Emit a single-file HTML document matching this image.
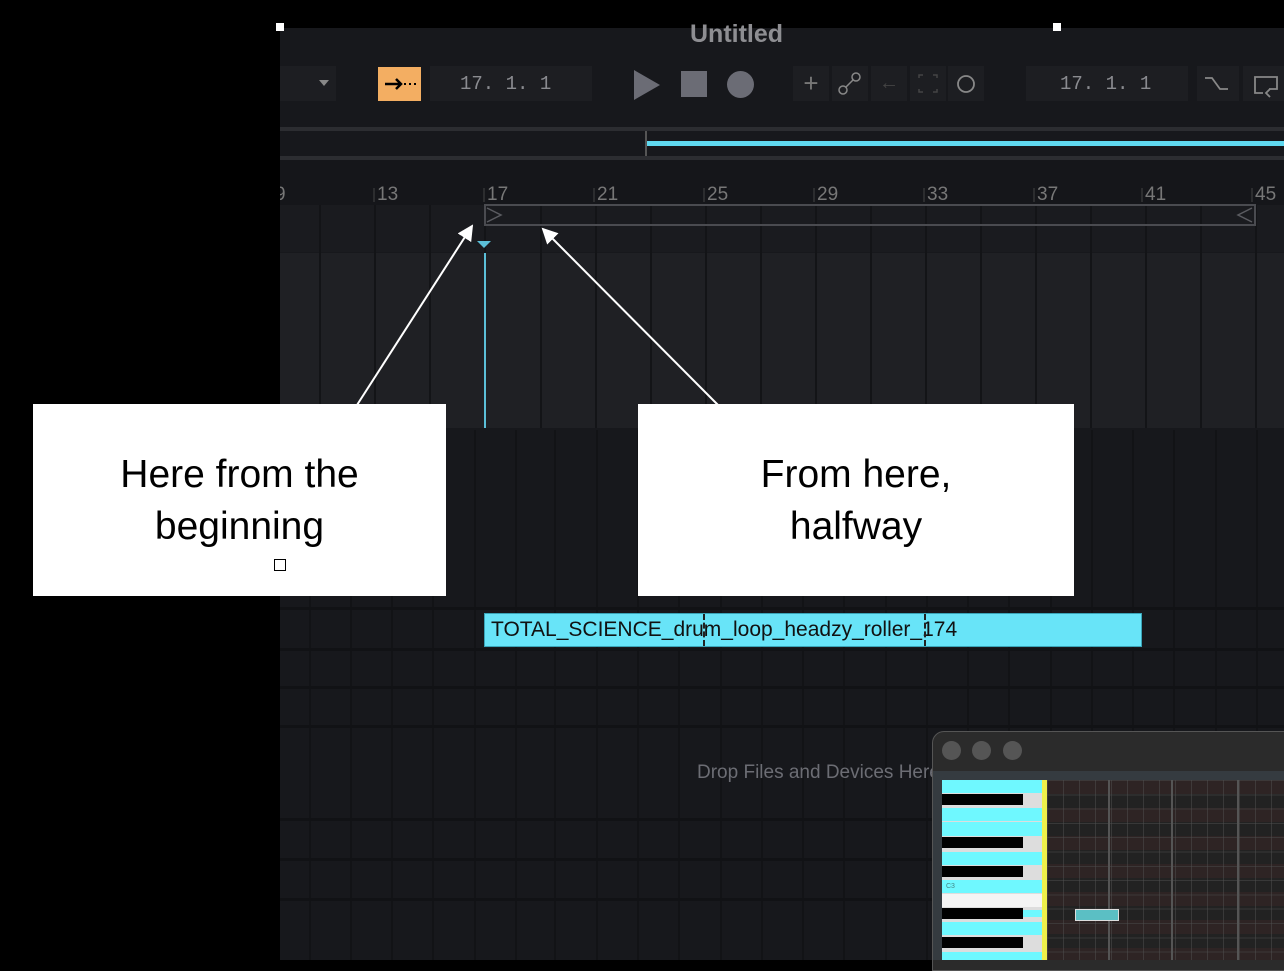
<!DOCTYPE html><html><head><style>
body{margin:0;width:1284px;height:960px;background:#000;position:relative;overflow:hidden;font-family:"Liberation Sans",sans-serif}
.a{position:absolute}
.mono{font-family:"Liberation Mono",monospace;color:#8a8b90;font-size:19px}
</style></head><body>
<div class="a" style="left:280px;top:28px;width:1004px;height:932px;background:#17181c"></div>
<div class="a" style="left:690px;top:20px;color:#8e8e92;font-weight:bold;font-size:25px">Untitled</div>
<div class="a" style="left:276px;top:23px;width:8px;height:8px;background:#fff"></div>
<div class="a" style="left:1053px;top:23px;width:8px;height:8px;background:#fff"></div>
<!-- toolbar -->
<div class="a" style="left:280px;top:66px;width:56px;height:35px;background:#1d1e22"></div>
<div class="a" style="left:319px;top:80px;width:0;height:0;border-left:5px solid transparent;border-right:5px solid transparent;border-top:6px solid #888"></div>
<div class="a" style="left:378px;top:67px;width:43px;height:34px;background:#f3ae62"><svg width="43" height="34"><path d="M7 17h16M18 12l5 5-5 5" stroke="#000" stroke-width="2.5" fill="none"/><path d="M26 17h2M31 17h2M36 17h2" stroke="#000" stroke-width="2"/></svg></div>
<div class="a" style="left:430px;top:66px;width:162px;height:35px;background:#1d1e22"></div>
<div class="a mono" style="left:460px;top:73px">17. 1. 1</div>
<div class="a" style="left:634px;top:70px;width:0;height:0;border-top:15px solid transparent;border-bottom:15px solid transparent;border-left:26px solid #6b6c75"></div>
<div class="a" style="left:681px;top:71px;width:26px;height:26px;background:#6b6c75"></div>
<div class="a" style="left:727px;top:71px;width:27px;height:27px;border-radius:50%;background:#6b6c75"></div>
<div class="a" style="left:793px;top:66px;width:36px;height:35px;background:#1d1e22;color:#777;font-size:26px;text-align:center;line-height:34px">+</div>
<div class="a" style="left:832px;top:66px;width:36px;height:35px;background:#1d1e22"><svg width="36" height="35"><circle cx="11" cy="24" r="4" fill="none" stroke="#888" stroke-width="1.5"/><circle cx="24" cy="11" r="4" fill="none" stroke="#888" stroke-width="1.5"/><path d="M14 21L21 14" stroke="#888" stroke-width="1.5"/></svg></div>
<div class="a" style="left:871px;top:66px;width:36px;height:35px;background:#1d1e22;color:#444;font-size:20px;text-align:center;line-height:34px">←</div>
<div class="a" style="left:910px;top:66px;width:36px;height:35px;background:#1d1e22"><svg width="36" height="35"><path d="M9 12V9h4M23 9h4v3M27 23v3h-4M13 26H9v-3" stroke="#444" fill="none" stroke-width="1.5"/></svg></div>
<div class="a" style="left:948px;top:66px;width:36px;height:35px;background:#1d1e22"><svg width="36" height="35"><circle cx="18" cy="18" r="8" fill="none" stroke="#888" stroke-width="1.8"/></svg></div>
<div class="a" style="left:1026px;top:66px;width:162px;height:35px;background:#1d1e22"></div>
<div class="a mono" style="left:1060px;top:73px">17. 1. 1</div>
<div class="a" style="left:1197px;top:66px;width:42px;height:35px;background:#1d1e22"><svg width="42" height="35"><path d="M8 12h7l8 11h8" stroke="#888" fill="none" stroke-width="1.8"/></svg></div>
<div class="a" style="left:1243px;top:66px;width:41px;height:35px;background:#1d1e22"><svg width="41" height="35"><path d="M20 27h-8v-16h22v12h-8M27 23l-4 4 4 4" stroke="#888" fill="none" stroke-width="1.8"/></svg></div>
<!-- overview -->
<div class="a" style="left:280px;top:127px;width:1004px;height:4px;background:#2c2d31"></div>
<div class="a" style="left:280px;top:156px;width:1004px;height:4px;background:#2c2d31"></div>
<div class="a" style="left:645px;top:131px;width:2px;height:25px;background:#555"></div>
<div class="a" style="left:647px;top:141px;width:637px;height:5px;background:#5fd8ef"></div>
<!-- ruler -->
<div class="a" style="left:280px;top:160px;width:1004px;height:45px;background:#15161a"></div>
<svg class="a" style="left:280px;top:160px" width="1004" height="800">
<g stroke="#444" stroke-width="1"><path d="M94 28v14M204 28v14M314 28v14M424 28v14M534 28v14M644 28v14M754 28v14M862 28v14M972 28v14"/></g>
<g font-family="Liberation Sans" font-size="19" fill="#777"><text x="-5" y="40">9</text><text x="97" y="40">13</text><text x="207" y="40">17</text><text x="317" y="40">21</text><text x="427" y="40">25</text><text x="537" y="40">29</text><text x="647" y="40">33</text><text x="757" y="40">37</text><text x="865" y="40">41</text><text x="975" y="40">45</text></g>
<rect x="0" y="45" width="1004" height="47" fill="#1a1b1f"/>
<rect x="0" y="93" width="1004" height="175" fill="#1f2024"/>
<g stroke="#131417" stroke-width="2" id="gu">
<path d="M40 45v223M95 45v223M150 45v223M205 45v223M261 45v223M316 45v223M371 45v223M426 45v223M481 45v223M536 45v223M591 45v223M646 45v223M701 45v223M756 45v223M811 45v223M866 45v223M921 45v223M976 45v223"/></g>
<g stroke="#121316" stroke-width="2">
<path d="M30 270v530M71 270v530M112 270v530M153 270v530M195 270v530M236 270v530M275 270v530M317 270v530M358 270v530M399 270v530M441 270v530M482 270v530M523 270v530M564 270v530M606 270v530M647 270v530M688 270v530M729 270v530M771 270v530M812 270v530M853 270v530M894 270v530M936 270v530M977 270v530"/></g>
</svg>
<div class="a" style="left:484px;top:204px;width:768px;height:18px;border:2px solid #4a4b50"></div>
<svg class="a" style="left:484px;top:204px" width="772" height="22"><path d="M3 4l14 7-14 7M768 4l-14 7 14 7" stroke="#5a5b60" fill="none" stroke-width="1.5"/></svg>
<div class="a" style="left:477px;top:241px;width:0;height:0;border-left:7px solid transparent;border-right:7px solid transparent;border-top:7px solid #5bbfd8"></div>
<div class="a" style="left:484px;top:253px;width:2px;height:175px;background:#5bbfd8"></div>
<div class="a" style="left:280px;top:607px;width:1004px;height:3px;background:#111215"></div>
<div class="a" style="left:280px;top:648px;width:1004px;height:3px;background:#111215"></div>
<div class="a" style="left:280px;top:686px;width:1004px;height:3px;background:#111215"></div>
<div class="a" style="left:280px;top:725px;width:1004px;height:3px;background:#111215"></div>
<div class="a" style="left:280px;top:818px;width:1004px;height:3px;background:#111215"></div>
<div class="a" style="left:280px;top:858px;width:1004px;height:3px;background:#111215"></div>
<div class="a" style="left:280px;top:898px;width:1004px;height:3px;background:#111215"></div>
<div class="a" style="left:484px;top:613px;background:#68e4f8;border:1px solid #3aa4b8;color:#111;font-size:21px;line-height:32px;padding-left:6px;box-sizing:border-box;width:658px;height:34px">TOTAL_SCIENCE_drum_loop_headzy_roller_174</div>
<div class="a" style="left:703px;top:614px;border-left:2px dashed #222;height:32px"></div>
<div class="a" style="left:924px;top:614px;border-left:2px dashed #222;height:32px"></div>
<div class="a" style="left:697px;top:762px;color:#6c6d74;font-size:19px">Drop Files and Devices Here</div>
<!-- callouts -->
<svg class="a" style="left:0;top:0" width="1284" height="960"><defs><marker id="m" markerWidth="8" markerHeight="8" refX="7" refY="4" orient="auto"><path d="M0 0L8 4L0 8z" fill="#fff"/></marker></defs>
<path d="M357 405L472 226" stroke="#fff" stroke-width="2" marker-end="url(#m)"/>
<path d="M718 405L543 229" stroke="#fff" stroke-width="2" marker-end="url(#m)"/></svg>
<div class="a" style="left:33px;top:404px;width:413px;height:192px;background:#fff;color:#000;font-size:39px;text-align:center;line-height:52px;padding-top:45px;box-sizing:border-box">Here from the<br>beginning</div>
<div class="a" style="left:274px;top:559px;width:12px;height:12px;border:1px solid #000;box-sizing:border-box;background:#fff"></div>
<div class="a" style="left:638px;top:404px;width:436px;height:192px;background:#fff;color:#000;font-size:39px;text-align:center;line-height:52px;padding-top:45px;box-sizing:border-box">From here,<br>halfway</div>
<!-- piano window -->
<div class="a" style="left:932px;top:731px;width:360px;height:240px;background:#2b2b2b;border-radius:12px 0 0 0;border:1px solid #555;box-sizing:border-box"></div>
<div class="a" style="left:942px;top:741px;width:19px;height:19px;border-radius:50%;background:#555"></div>
<div class="a" style="left:972px;top:741px;width:19px;height:19px;border-radius:50%;background:#555"></div>
<div class="a" style="left:1003px;top:741px;width:19px;height:19px;border-radius:50%;background:#555"></div>
<div class="a" style="left:933px;top:771px;width:351px;height:189px;background:#353b40"></div>
<div class="a" style="left:1047px;top:780px;width:237px;height:180px;background:repeating-linear-gradient(180deg,#2e2424 0 14px,#222 14px 28px);"></div>
<div class="a" style="left:1047px;top:780px;width:237px;height:180px;background-image:repeating-linear-gradient(90deg,rgba(80,80,80,.5) 0 1px,transparent 1px 16px),repeating-linear-gradient(180deg,rgba(70,70,70,.6) 0 1px,transparent 1px 14.3px)"></div>
<div class="a" style="left:1108px;top:780px;width:2px;height:180px;background:#555"></div>
<div class="a" style="left:1171px;top:780px;width:2px;height:180px;background:#555"></div>
<div class="a" style="left:1237px;top:780px;width:2px;height:180px;background:#555"></div>
<div class="a" style="left:1042px;top:780px;width:5px;height:180px;background:#eef04a"></div>
<div class="a" style="left:942px;top:780px;width:100px;height:180px;background:#ddd"></div>
<div class="a" style="left:942px;top:780px;width:100px;height:13px;background:#6ff8ff"></div>
<div class="a" style="left:942px;top:794px;width:81px;height:11px;background:#000"></div>
<div class="a" style="left:942px;top:808px;width:100px;height:13px;background:#6ff8ff"></div>
<div class="a" style="left:942px;top:822px;width:100px;height:14px;background:#6ff8ff"></div>
<div class="a" style="left:942px;top:837px;width:81px;height:11px;background:#000"></div>
<div class="a" style="left:942px;top:852px;width:100px;height:13px;background:#6ff8ff"></div>
<div class="a" style="left:942px;top:866px;width:81px;height:11px;background:#000"></div>
<div class="a" style="left:942px;top:880px;width:100px;height:13px;background:#6ff8ff;font-size:7px;color:#488;line-height:13px;padding-left:4px;box-sizing:border-box">C3</div>
<div class="a" style="left:942px;top:894px;width:100px;height:13px;background:#f4f4f4"></div>
<div class="a" style="left:942px;top:908px;width:81px;height:11px;background:#000"></div>
<div class="a" style="left:1023px;top:910px;width:19px;height:7px;background:#6ff8ff"></div>
<div class="a" style="left:942px;top:922px;width:100px;height:13px;background:#6ff8ff"></div>
<div class="a" style="left:942px;top:937px;width:81px;height:11px;background:#000"></div>
<div class="a" style="left:942px;top:952px;width:100px;height:8px;background:#6ff8ff"></div>
<div class="a" style="left:1075px;top:909px;width:44px;height:12px;background:#5bbfc4;border:1px solid #ddd;box-sizing:border-box"></div>
</body></html>
